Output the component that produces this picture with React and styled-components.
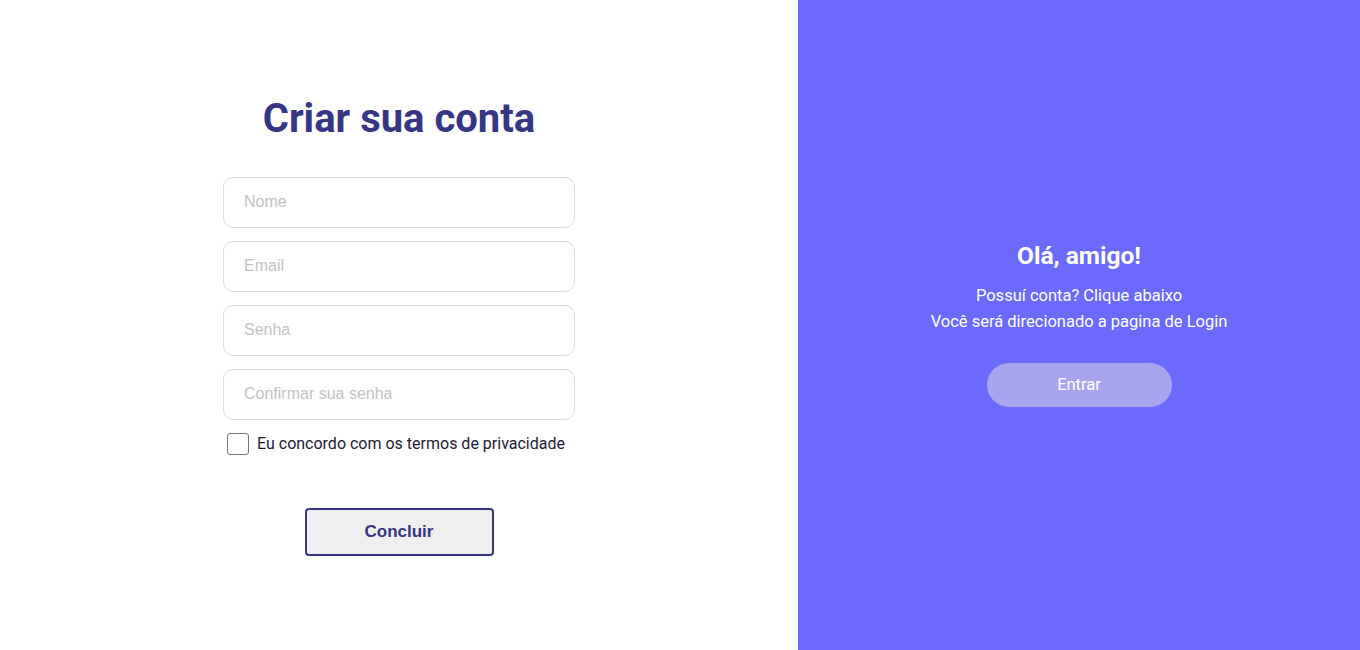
import styled, { createGlobalStyle } from 'styled-components';

const GlobalStyle = createGlobalStyle`
    * { box-sizing: border-box; }
    body {
        margin: 0;
        font-family: Roboto, "Liberation Sans", sans-serif;
    }
`

const Page = styled.div`
    display: flex;
    height: 650px;
    width: 1360px;
`

const FormSide = styled.section`
    width: 798px;
    display: flex;
    flex-direction: column;
    align-items: center;
    justify-content: center;
    background: #fff;
`

const Title = styled.h1`
    margin: 0 0 35px;
    font-family: Roboto, sans-serif;
    font-size: 40px;
    font-weight: 700;
    color: #373684;
`

const Form = styled.form`
    width: 352px;
    display: flex;
    flex-direction: column;
    gap: 13px;
`

const Input = styled.input`
    height: 51px;
    width: 100%;
    padding: 0 20px;
    border: 1px solid #dcdcdc;
    border-radius: 10px;
    font-family: "Liberation Sans", Arial, sans-serif;
    font-size: 16px;
    outline: none;

    &::placeholder {
        color: #c3c3c3;
    }
`

const CheckRow = styled.label`
    display: flex;
    align-items: center;
    gap: 8px;
    margin: 0 0 0 4px;
    font-size: 16px;
    color: #1c1b33;
`

const Box = styled.span`
    width: 22px;
    height: 22px;
    border: 1px solid #767676;
    border-radius: 3px;
    background: #fff;
`

const Submit = styled.button`
    align-self: center;
    margin-top: 40px;
    width: 189px;
    height: 48px;
    border: 2px solid #373684;
    border-radius: 4px;
    background: #efefef;
    color: #373684;
    font-family: "Liberation Sans", Arial, sans-serif;
    font-size: 17px;
    font-weight: 700;
`

const Aside = styled.section`
    flex: 1;
    display: flex;
    flex-direction: column;
    align-items: center;
    justify-content: center;
    padding-bottom: 3px;
    background: #6c6afc;
    color: #fff;
    text-align: center;
`

const Hello = styled.h2`
    margin: 0 0 13px;
    font-size: 24.5px;
    font-weight: 700;
`

const Text = styled.p`
    margin: 0;
    font-size: 16.5px;
    line-height: 26px;
`

const Enter = styled.button`
    margin-top: 28px;
    width: 185px;
    height: 44px;
    border: none;
    border-radius: 22px;
    background: #a8a5ee;
    color: #fff;
    font-family: Roboto, sans-serif;
    font-size: 16.5px;
`

const App = () => {
    return (
        <>
            <GlobalStyle />
            <Page>
                <FormSide>
                    <Title>Criar sua conta</Title>
                    <Form onSubmit={(e) => e.preventDefault()}>
                        <Input placeholder="Nome" />
                        <Input placeholder="Email" />
                        <Input type="password" placeholder="Senha" />
                        <Input type="password" placeholder="Confirmar sua senha" />
                        <CheckRow>
                            <Box />
                            Eu concordo com os termos de privacidade
                        </CheckRow>
                        <Submit type="submit">Concluir</Submit>
                    </Form>
                </FormSide>
                <Aside>
                    <Hello>Olá, amigo!</Hello>
                    <Text>Possuí conta? Clique abaixo</Text>
                    <Text>Você será direcionado a pagina de Login</Text>
                    <Enter>Entrar</Enter>
                </Aside>
            </Page>
        </>
    );
}

export default App;
